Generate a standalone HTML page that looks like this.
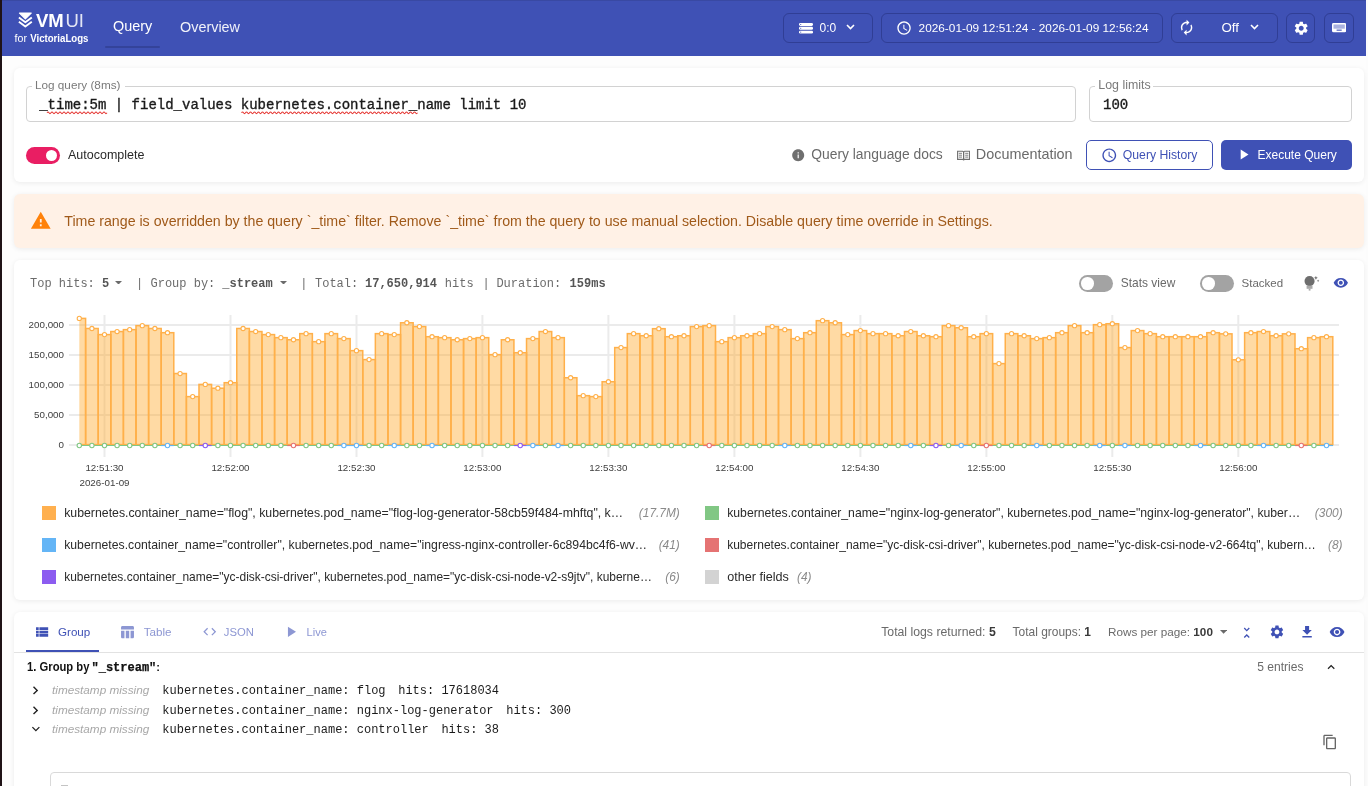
<!DOCTYPE html>
<html><head><meta charset="utf-8">
<style>
*{box-sizing:border-box;margin:0;padding:0}
html,body{width:1368px;height:786px;overflow:hidden}
body{position:relative;background:#fdfdfd;font-family:"Liberation Sans",sans-serif;color:#1a1a1a}
.abs{position:absolute}
.lb{position:absolute;left:0;top:0;width:2px;height:786px;background:#1f1216}
.rs{position:absolute;left:1366px;top:0;width:2px;height:786px;background:#fcfcfc}
.hdr{position:absolute;left:2px;top:0;width:1364px;height:56px;background:#3f51b5}
.card{position:absolute;left:14px;width:1350px;background:#fff;border-radius:6px;box-shadow:0 1px 5px rgba(0,0,0,0.075)}
.t{position:absolute;white-space:pre;line-height:1}
.mono{font-family:"Liberation Mono",monospace}
.hbox{position:absolute;border:1px solid rgba(0,0,0,0.18);border-radius:6px;top:13px;height:29px}
.field{position:absolute;border:1px solid #cfcfcf;border-radius:4px}
.flabel{position:absolute;background:#fff;padding:0 3px;color:#808080;font-size:11.7px;line-height:1;white-space:nowrap}
.tog{position:absolute;width:34px;height:17px;border-radius:9px}
.tog::after{content:"";position:absolute;top:2.5px;width:12px;height:12px;border-radius:50%;background:#fff}
.tog.on{background:#e91e63}.tog.on::after{left:19.5px}
.tog.off{background:#a6a6a6}.tog.off::after{left:2.5px}
.sq{position:absolute;width:14px;height:14px}
.lg{position:absolute;font-size:12.4px;color:#2b2b2b;white-space:nowrap;line-height:1}
.cnt{position:absolute;font-size:12.4px;color:#8a8a8a;font-style:italic;white-space:nowrap;line-height:1;text-align:right}
</style></head><body>
<div class="lb"></div><div class="rs"></div>
<div class="hdr"></div>
<!-- cards -->
<div class="card" style="top:68px;height:114px"></div>
<div class="card" style="top:194px;height:54px;background:#fff1e6"></div>
<div class="card" style="top:260px;height:340px"></div>
<div class="card" style="top:612px;height:200px"></div>
<svg class="chart" width="1368" height="786" viewBox="0 0 1368 786" style="position:absolute;left:0;top:0;will-change:transform;font-family:'Liberation Sans',sans-serif;font-size:9.8px;fill:#404040"><line x1="69" y1="325.0" x2="1339" y2="325.0" stroke="#ebebeb" stroke-width="2"/><line x1="69" y1="355.0" x2="1339" y2="355.0" stroke="#ebebeb" stroke-width="2"/><line x1="69" y1="385.0" x2="1339" y2="385.0" stroke="#ebebeb" stroke-width="2"/><line x1="69" y1="415.0" x2="1339" y2="415.0" stroke="#ebebeb" stroke-width="2"/><line x1="69" y1="445.0" x2="1339" y2="445.0" stroke="#ebebeb" stroke-width="2"/><line x1="104.5" y1="315" x2="104.5" y2="457" stroke="#ebebeb" stroke-width="2"/><line x1="230.5" y1="315" x2="230.5" y2="457" stroke="#ebebeb" stroke-width="2"/><line x1="356.5" y1="315" x2="356.5" y2="457" stroke="#ebebeb" stroke-width="2"/><line x1="482.4" y1="315" x2="482.4" y2="457" stroke="#ebebeb" stroke-width="2"/><line x1="608.4" y1="315" x2="608.4" y2="457" stroke="#ebebeb" stroke-width="2"/><line x1="734.4" y1="315" x2="734.4" y2="457" stroke="#ebebeb" stroke-width="2"/><line x1="860.4" y1="315" x2="860.4" y2="457" stroke="#ebebeb" stroke-width="2"/><line x1="986.4" y1="315" x2="986.4" y2="457" stroke="#ebebeb" stroke-width="2"/><line x1="1112.3" y1="315" x2="1112.3" y2="457" stroke="#ebebeb" stroke-width="2"/><line x1="1238.3" y1="315" x2="1238.3" y2="457" stroke="#ebebeb" stroke-width="2"/><defs><clipPath id="pc"><rect x="79.3" y="300" width="1260" height="160"/></clipPath></defs><g clip-path="url(#pc)" fill="rgba(255,167,38,0.42)" stroke="#ffb04a" stroke-width="1.5"><rect x="73.00" y="318.38" width="12.60" height="126.22"/><rect x="85.60" y="328.49" width="12.60" height="116.11"/><rect x="98.20" y="334.60" width="12.60" height="110.00"/><rect x="110.79" y="331.55" width="12.60" height="113.05"/><rect x="123.39" y="329.64" width="12.60" height="114.96"/><rect x="135.99" y="325.63" width="12.60" height="118.97"/><rect x="148.59" y="328.49" width="12.60" height="116.11"/><rect x="161.19" y="332.69" width="12.60" height="111.91"/><rect x="173.78" y="373.53" width="12.60" height="71.07"/><rect x="186.38" y="396.62" width="12.60" height="47.98"/><rect x="198.98" y="384.41" width="12.60" height="60.19"/><rect x="211.58" y="388.22" width="12.60" height="56.38"/><rect x="224.18" y="382.69" width="12.60" height="61.91"/><rect x="236.77" y="328.49" width="12.60" height="116.11"/><rect x="249.37" y="331.55" width="12.60" height="113.05"/><rect x="261.97" y="334.60" width="12.60" height="110.00"/><rect x="274.57" y="337.65" width="12.60" height="106.95"/><rect x="287.17" y="339.75" width="12.60" height="104.85"/><rect x="299.76" y="333.64" width="12.60" height="110.96"/><rect x="312.36" y="341.66" width="12.60" height="102.94"/><rect x="324.96" y="333.64" width="12.60" height="110.96"/><rect x="337.56" y="338.61" width="12.60" height="105.99"/><rect x="350.16" y="350.63" width="12.60" height="93.97"/><rect x="362.75" y="359.60" width="12.60" height="85.00"/><rect x="375.35" y="333.64" width="12.60" height="110.96"/><rect x="387.95" y="334.60" width="12.60" height="110.00"/><rect x="400.55" y="322.77" width="12.60" height="121.83"/><rect x="413.15" y="326.58" width="12.60" height="118.02"/><rect x="425.74" y="336.70" width="12.60" height="107.90"/><rect x="438.34" y="337.65" width="12.60" height="106.95"/><rect x="450.94" y="339.75" width="12.60" height="104.85"/><rect x="463.54" y="338.61" width="12.60" height="105.99"/><rect x="476.14" y="337.65" width="12.60" height="106.95"/><rect x="488.73" y="354.64" width="12.60" height="89.96"/><rect x="501.33" y="339.75" width="12.60" height="104.85"/><rect x="513.93" y="352.73" width="12.60" height="91.87"/><rect x="526.53" y="338.61" width="12.60" height="105.99"/><rect x="539.13" y="331.55" width="12.60" height="113.05"/><rect x="551.72" y="337.65" width="12.60" height="106.95"/><rect x="564.32" y="377.73" width="12.60" height="66.87"/><rect x="576.92" y="395.67" width="12.60" height="48.93"/><rect x="589.52" y="396.62" width="12.60" height="47.98"/><rect x="602.12" y="381.74" width="12.60" height="62.86"/><rect x="614.71" y="347.58" width="12.60" height="97.02"/><rect x="627.31" y="333.64" width="12.60" height="110.96"/><rect x="639.91" y="335.74" width="12.60" height="108.86"/><rect x="652.51" y="328.68" width="12.60" height="115.92"/><rect x="665.11" y="336.70" width="12.60" height="107.90"/><rect x="677.70" y="335.74" width="12.60" height="108.86"/><rect x="690.30" y="326.58" width="12.60" height="118.02"/><rect x="702.90" y="325.63" width="12.60" height="118.97"/><rect x="715.50" y="341.66" width="12.60" height="102.94"/><rect x="728.10" y="337.65" width="12.60" height="106.95"/><rect x="740.69" y="335.74" width="12.60" height="108.86"/><rect x="753.29" y="333.64" width="12.60" height="110.96"/><rect x="765.89" y="326.58" width="12.60" height="118.02"/><rect x="778.49" y="329.64" width="12.60" height="114.96"/><rect x="791.09" y="338.61" width="12.60" height="105.99"/><rect x="803.68" y="332.69" width="12.60" height="111.91"/><rect x="816.28" y="320.67" width="12.60" height="123.93"/><rect x="828.88" y="322.77" width="12.60" height="121.83"/><rect x="841.48" y="334.60" width="12.60" height="110.00"/><rect x="854.08" y="330.59" width="12.60" height="114.01"/><rect x="866.67" y="333.64" width="12.60" height="110.96"/><rect x="879.27" y="333.64" width="12.60" height="110.96"/><rect x="891.87" y="335.74" width="12.60" height="108.86"/><rect x="904.47" y="331.55" width="12.60" height="113.05"/><rect x="917.07" y="335.74" width="12.60" height="108.86"/><rect x="929.66" y="336.70" width="12.60" height="107.90"/><rect x="942.26" y="325.63" width="12.60" height="118.97"/><rect x="954.86" y="327.73" width="12.60" height="116.87"/><rect x="967.46" y="336.70" width="12.60" height="107.90"/><rect x="980.06" y="333.64" width="12.60" height="110.96"/><rect x="992.65" y="363.61" width="12.60" height="80.99"/><rect x="1005.25" y="333.64" width="12.60" height="110.96"/><rect x="1017.85" y="335.74" width="12.60" height="108.86"/><rect x="1030.45" y="338.61" width="12.60" height="105.99"/><rect x="1043.05" y="337.65" width="12.60" height="106.95"/><rect x="1055.64" y="332.69" width="12.60" height="111.91"/><rect x="1068.24" y="325.63" width="12.60" height="118.97"/><rect x="1080.84" y="332.69" width="12.60" height="111.91"/><rect x="1093.44" y="324.67" width="12.60" height="119.93"/><rect x="1106.04" y="323.72" width="12.60" height="120.88"/><rect x="1118.63" y="347.58" width="12.60" height="97.02"/><rect x="1131.23" y="330.59" width="12.60" height="114.01"/><rect x="1143.83" y="333.64" width="12.60" height="110.96"/><rect x="1156.43" y="336.70" width="12.60" height="107.90"/><rect x="1169.03" y="336.70" width="12.60" height="107.90"/><rect x="1181.62" y="336.70" width="12.60" height="107.90"/><rect x="1194.22" y="336.70" width="12.60" height="107.90"/><rect x="1206.82" y="332.69" width="12.60" height="111.91"/><rect x="1219.42" y="333.84" width="12.60" height="110.76"/><rect x="1232.02" y="359.79" width="12.60" height="84.81"/><rect x="1244.61" y="332.69" width="12.60" height="111.91"/><rect x="1257.21" y="331.55" width="12.60" height="113.05"/><rect x="1269.81" y="335.74" width="12.60" height="108.86"/><rect x="1282.41" y="333.84" width="12.60" height="110.76"/><rect x="1295.01" y="348.72" width="12.60" height="95.88"/><rect x="1307.60" y="337.65" width="12.60" height="106.95"/><rect x="1320.20" y="336.70" width="12.60" height="107.90"/></g><line x1="79.3" y1="445.5" x2="1333" y2="445.5" stroke="#81c784" stroke-width="1.2"/><line x1="161.19" y1="445.5" x2="173.79" y2="445.5" stroke="#64b5f6" stroke-width="1.2"/><line x1="198.98" y1="445.5" x2="211.58" y2="445.5" stroke="#8c5cf0" stroke-width="1.2"/><line x1="287.17" y1="445.5" x2="299.77" y2="445.5" stroke="#e57373" stroke-width="1.2"/><line x1="337.56" y1="445.5" x2="350.16" y2="445.5" stroke="#64b5f6" stroke-width="1.2"/><line x1="350.16" y1="445.5" x2="362.76" y2="445.5" stroke="#64b5f6" stroke-width="1.2"/><line x1="387.95" y1="445.5" x2="400.55" y2="445.5" stroke="#64b5f6" stroke-width="1.2"/><line x1="425.74" y1="445.5" x2="438.34" y2="445.5" stroke="#64b5f6" stroke-width="1.2"/><line x1="513.93" y1="445.5" x2="526.53" y2="445.5" stroke="#8c5cf0" stroke-width="1.2"/><line x1="526.53" y1="445.5" x2="539.13" y2="445.5" stroke="#64b5f6" stroke-width="1.2"/><line x1="551.72" y1="445.5" x2="564.32" y2="445.5" stroke="#64b5f6" stroke-width="1.2"/><line x1="702.90" y1="445.5" x2="715.50" y2="445.5" stroke="#e57373" stroke-width="1.2"/><line x1="778.49" y1="445.5" x2="791.09" y2="445.5" stroke="#64b5f6" stroke-width="1.2"/><line x1="904.47" y1="445.5" x2="917.07" y2="445.5" stroke="#64b5f6" stroke-width="1.2"/><line x1="929.66" y1="445.5" x2="942.26" y2="445.5" stroke="#8c5cf0" stroke-width="1.2"/><line x1="954.86" y1="445.5" x2="967.46" y2="445.5" stroke="#64b5f6" stroke-width="1.2"/><line x1="980.06" y1="445.5" x2="992.66" y2="445.5" stroke="#e57373" stroke-width="1.2"/><line x1="1030.45" y1="445.5" x2="1043.05" y2="445.5" stroke="#64b5f6" stroke-width="1.2"/><line x1="1093.44" y1="445.5" x2="1106.04" y2="445.5" stroke="#64b5f6" stroke-width="1.2"/><line x1="1118.63" y1="445.5" x2="1131.23" y2="445.5" stroke="#64b5f6" stroke-width="1.2"/><line x1="1194.22" y1="445.5" x2="1206.82" y2="445.5" stroke="#64b5f6" stroke-width="1.2"/><line x1="1257.21" y1="445.5" x2="1269.81" y2="445.5" stroke="#64b5f6" stroke-width="1.2"/><line x1="1295.01" y1="445.5" x2="1307.61" y2="445.5" stroke="#e57373" stroke-width="1.2"/><line x1="1320.20" y1="445.5" x2="1332.80" y2="445.5" stroke="#64b5f6" stroke-width="1.2"/><g fill="#fff" stroke-width="1.1"><circle cx="79.30" cy="318.38" r="2.1" stroke="#ffb04a"/><circle cx="79.30" cy="445.5" r="2.2" stroke="#81c784"/><circle cx="91.90" cy="328.49" r="2.1" stroke="#ffb04a"/><circle cx="91.90" cy="445.5" r="2.2" stroke="#81c784"/><circle cx="104.50" cy="334.60" r="2.1" stroke="#ffb04a"/><circle cx="104.50" cy="445.5" r="2.2" stroke="#81c784"/><circle cx="117.09" cy="331.55" r="2.1" stroke="#ffb04a"/><circle cx="117.09" cy="445.5" r="2.2" stroke="#81c784"/><circle cx="129.69" cy="329.64" r="2.1" stroke="#ffb04a"/><circle cx="129.69" cy="445.5" r="2.2" stroke="#81c784"/><circle cx="142.29" cy="325.63" r="2.1" stroke="#ffb04a"/><circle cx="142.29" cy="445.5" r="2.2" stroke="#81c784"/><circle cx="154.89" cy="328.49" r="2.1" stroke="#ffb04a"/><circle cx="154.89" cy="445.5" r="2.2" stroke="#81c784"/><circle cx="167.49" cy="332.69" r="2.1" stroke="#ffb04a"/><circle cx="167.49" cy="445.5" r="2.2" stroke="#64b5f6"/><circle cx="180.08" cy="373.53" r="2.1" stroke="#ffb04a"/><circle cx="180.08" cy="445.5" r="2.2" stroke="#81c784"/><circle cx="192.68" cy="396.62" r="2.1" stroke="#ffb04a"/><circle cx="192.68" cy="445.5" r="2.2" stroke="#81c784"/><circle cx="205.28" cy="384.41" r="2.1" stroke="#ffb04a"/><circle cx="205.28" cy="445.5" r="2.2" stroke="#8c5cf0"/><circle cx="217.88" cy="388.22" r="2.1" stroke="#ffb04a"/><circle cx="217.88" cy="445.5" r="2.2" stroke="#81c784"/><circle cx="230.48" cy="382.69" r="2.1" stroke="#ffb04a"/><circle cx="230.48" cy="445.5" r="2.2" stroke="#81c784"/><circle cx="243.07" cy="328.49" r="2.1" stroke="#ffb04a"/><circle cx="243.07" cy="445.5" r="2.2" stroke="#81c784"/><circle cx="255.67" cy="331.55" r="2.1" stroke="#ffb04a"/><circle cx="255.67" cy="445.5" r="2.2" stroke="#81c784"/><circle cx="268.27" cy="334.60" r="2.1" stroke="#ffb04a"/><circle cx="268.27" cy="445.5" r="2.2" stroke="#81c784"/><circle cx="280.87" cy="337.65" r="2.1" stroke="#ffb04a"/><circle cx="280.87" cy="445.5" r="2.2" stroke="#81c784"/><circle cx="293.47" cy="339.75" r="2.1" stroke="#ffb04a"/><circle cx="293.47" cy="445.5" r="2.2" stroke="#e57373"/><circle cx="306.06" cy="333.64" r="2.1" stroke="#ffb04a"/><circle cx="306.06" cy="445.5" r="2.2" stroke="#81c784"/><circle cx="318.66" cy="341.66" r="2.1" stroke="#ffb04a"/><circle cx="318.66" cy="445.5" r="2.2" stroke="#81c784"/><circle cx="331.26" cy="333.64" r="2.1" stroke="#ffb04a"/><circle cx="331.26" cy="445.5" r="2.2" stroke="#81c784"/><circle cx="343.86" cy="338.61" r="2.1" stroke="#ffb04a"/><circle cx="343.86" cy="445.5" r="2.2" stroke="#64b5f6"/><circle cx="356.46" cy="350.63" r="2.1" stroke="#ffb04a"/><circle cx="356.46" cy="445.5" r="2.2" stroke="#64b5f6"/><circle cx="369.05" cy="359.60" r="2.1" stroke="#ffb04a"/><circle cx="369.05" cy="445.5" r="2.2" stroke="#81c784"/><circle cx="381.65" cy="333.64" r="2.1" stroke="#ffb04a"/><circle cx="381.65" cy="445.5" r="2.2" stroke="#81c784"/><circle cx="394.25" cy="334.60" r="2.1" stroke="#ffb04a"/><circle cx="394.25" cy="445.5" r="2.2" stroke="#64b5f6"/><circle cx="406.85" cy="322.77" r="2.1" stroke="#ffb04a"/><circle cx="406.85" cy="445.5" r="2.2" stroke="#81c784"/><circle cx="419.45" cy="326.58" r="2.1" stroke="#ffb04a"/><circle cx="419.45" cy="445.5" r="2.2" stroke="#81c784"/><circle cx="432.04" cy="336.70" r="2.1" stroke="#ffb04a"/><circle cx="432.04" cy="445.5" r="2.2" stroke="#64b5f6"/><circle cx="444.64" cy="337.65" r="2.1" stroke="#ffb04a"/><circle cx="444.64" cy="445.5" r="2.2" stroke="#81c784"/><circle cx="457.24" cy="339.75" r="2.1" stroke="#ffb04a"/><circle cx="457.24" cy="445.5" r="2.2" stroke="#81c784"/><circle cx="469.84" cy="338.61" r="2.1" stroke="#ffb04a"/><circle cx="469.84" cy="445.5" r="2.2" stroke="#81c784"/><circle cx="482.44" cy="337.65" r="2.1" stroke="#ffb04a"/><circle cx="482.44" cy="445.5" r="2.2" stroke="#81c784"/><circle cx="495.03" cy="354.64" r="2.1" stroke="#ffb04a"/><circle cx="495.03" cy="445.5" r="2.2" stroke="#81c784"/><circle cx="507.63" cy="339.75" r="2.1" stroke="#ffb04a"/><circle cx="507.63" cy="445.5" r="2.2" stroke="#81c784"/><circle cx="520.23" cy="352.73" r="2.1" stroke="#ffb04a"/><circle cx="520.23" cy="445.5" r="2.2" stroke="#8c5cf0"/><circle cx="532.83" cy="338.61" r="2.1" stroke="#ffb04a"/><circle cx="532.83" cy="445.5" r="2.2" stroke="#64b5f6"/><circle cx="545.43" cy="331.55" r="2.1" stroke="#ffb04a"/><circle cx="545.43" cy="445.5" r="2.2" stroke="#81c784"/><circle cx="558.02" cy="337.65" r="2.1" stroke="#ffb04a"/><circle cx="558.02" cy="445.5" r="2.2" stroke="#64b5f6"/><circle cx="570.62" cy="377.73" r="2.1" stroke="#ffb04a"/><circle cx="570.62" cy="445.5" r="2.2" stroke="#81c784"/><circle cx="583.22" cy="395.67" r="2.1" stroke="#ffb04a"/><circle cx="583.22" cy="445.5" r="2.2" stroke="#81c784"/><circle cx="595.82" cy="396.62" r="2.1" stroke="#ffb04a"/><circle cx="595.82" cy="445.5" r="2.2" stroke="#81c784"/><circle cx="608.42" cy="381.74" r="2.1" stroke="#ffb04a"/><circle cx="608.42" cy="445.5" r="2.2" stroke="#81c784"/><circle cx="621.01" cy="347.58" r="2.1" stroke="#ffb04a"/><circle cx="621.01" cy="445.5" r="2.2" stroke="#81c784"/><circle cx="633.61" cy="333.64" r="2.1" stroke="#ffb04a"/><circle cx="633.61" cy="445.5" r="2.2" stroke="#81c784"/><circle cx="646.21" cy="335.74" r="2.1" stroke="#ffb04a"/><circle cx="646.21" cy="445.5" r="2.2" stroke="#81c784"/><circle cx="658.81" cy="328.68" r="2.1" stroke="#ffb04a"/><circle cx="658.81" cy="445.5" r="2.2" stroke="#81c784"/><circle cx="671.41" cy="336.70" r="2.1" stroke="#ffb04a"/><circle cx="671.41" cy="445.5" r="2.2" stroke="#81c784"/><circle cx="684.00" cy="335.74" r="2.1" stroke="#ffb04a"/><circle cx="684.00" cy="445.5" r="2.2" stroke="#81c784"/><circle cx="696.60" cy="326.58" r="2.1" stroke="#ffb04a"/><circle cx="696.60" cy="445.5" r="2.2" stroke="#81c784"/><circle cx="709.20" cy="325.63" r="2.1" stroke="#ffb04a"/><circle cx="709.20" cy="445.5" r="2.2" stroke="#e57373"/><circle cx="721.80" cy="341.66" r="2.1" stroke="#ffb04a"/><circle cx="721.80" cy="445.5" r="2.2" stroke="#81c784"/><circle cx="734.40" cy="337.65" r="2.1" stroke="#ffb04a"/><circle cx="734.40" cy="445.5" r="2.2" stroke="#81c784"/><circle cx="746.99" cy="335.74" r="2.1" stroke="#ffb04a"/><circle cx="746.99" cy="445.5" r="2.2" stroke="#81c784"/><circle cx="759.59" cy="333.64" r="2.1" stroke="#ffb04a"/><circle cx="759.59" cy="445.5" r="2.2" stroke="#81c784"/><circle cx="772.19" cy="326.58" r="2.1" stroke="#ffb04a"/><circle cx="772.19" cy="445.5" r="2.2" stroke="#81c784"/><circle cx="784.79" cy="329.64" r="2.1" stroke="#ffb04a"/><circle cx="784.79" cy="445.5" r="2.2" stroke="#64b5f6"/><circle cx="797.39" cy="338.61" r="2.1" stroke="#ffb04a"/><circle cx="797.39" cy="445.5" r="2.2" stroke="#81c784"/><circle cx="809.98" cy="332.69" r="2.1" stroke="#ffb04a"/><circle cx="809.98" cy="445.5" r="2.2" stroke="#81c784"/><circle cx="822.58" cy="320.67" r="2.1" stroke="#ffb04a"/><circle cx="822.58" cy="445.5" r="2.2" stroke="#81c784"/><circle cx="835.18" cy="322.77" r="2.1" stroke="#ffb04a"/><circle cx="835.18" cy="445.5" r="2.2" stroke="#81c784"/><circle cx="847.78" cy="334.60" r="2.1" stroke="#ffb04a"/><circle cx="847.78" cy="445.5" r="2.2" stroke="#81c784"/><circle cx="860.38" cy="330.59" r="2.1" stroke="#ffb04a"/><circle cx="860.38" cy="445.5" r="2.2" stroke="#81c784"/><circle cx="872.97" cy="333.64" r="2.1" stroke="#ffb04a"/><circle cx="872.97" cy="445.5" r="2.2" stroke="#81c784"/><circle cx="885.57" cy="333.64" r="2.1" stroke="#ffb04a"/><circle cx="885.57" cy="445.5" r="2.2" stroke="#81c784"/><circle cx="898.17" cy="335.74" r="2.1" stroke="#ffb04a"/><circle cx="898.17" cy="445.5" r="2.2" stroke="#81c784"/><circle cx="910.77" cy="331.55" r="2.1" stroke="#ffb04a"/><circle cx="910.77" cy="445.5" r="2.2" stroke="#64b5f6"/><circle cx="923.37" cy="335.74" r="2.1" stroke="#ffb04a"/><circle cx="923.37" cy="445.5" r="2.2" stroke="#81c784"/><circle cx="935.96" cy="336.70" r="2.1" stroke="#ffb04a"/><circle cx="935.96" cy="445.5" r="2.2" stroke="#8c5cf0"/><circle cx="948.56" cy="325.63" r="2.1" stroke="#ffb04a"/><circle cx="948.56" cy="445.5" r="2.2" stroke="#81c784"/><circle cx="961.16" cy="327.73" r="2.1" stroke="#ffb04a"/><circle cx="961.16" cy="445.5" r="2.2" stroke="#64b5f6"/><circle cx="973.76" cy="336.70" r="2.1" stroke="#ffb04a"/><circle cx="973.76" cy="445.5" r="2.2" stroke="#81c784"/><circle cx="986.36" cy="333.64" r="2.1" stroke="#ffb04a"/><circle cx="986.36" cy="445.5" r="2.2" stroke="#e57373"/><circle cx="998.95" cy="363.61" r="2.1" stroke="#ffb04a"/><circle cx="998.95" cy="445.5" r="2.2" stroke="#81c784"/><circle cx="1011.55" cy="333.64" r="2.1" stroke="#ffb04a"/><circle cx="1011.55" cy="445.5" r="2.2" stroke="#81c784"/><circle cx="1024.15" cy="335.74" r="2.1" stroke="#ffb04a"/><circle cx="1024.15" cy="445.5" r="2.2" stroke="#81c784"/><circle cx="1036.75" cy="338.61" r="2.1" stroke="#ffb04a"/><circle cx="1036.75" cy="445.5" r="2.2" stroke="#64b5f6"/><circle cx="1049.35" cy="337.65" r="2.1" stroke="#ffb04a"/><circle cx="1049.35" cy="445.5" r="2.2" stroke="#81c784"/><circle cx="1061.94" cy="332.69" r="2.1" stroke="#ffb04a"/><circle cx="1061.94" cy="445.5" r="2.2" stroke="#81c784"/><circle cx="1074.54" cy="325.63" r="2.1" stroke="#ffb04a"/><circle cx="1074.54" cy="445.5" r="2.2" stroke="#81c784"/><circle cx="1087.14" cy="332.69" r="2.1" stroke="#ffb04a"/><circle cx="1087.14" cy="445.5" r="2.2" stroke="#81c784"/><circle cx="1099.74" cy="324.67" r="2.1" stroke="#ffb04a"/><circle cx="1099.74" cy="445.5" r="2.2" stroke="#64b5f6"/><circle cx="1112.34" cy="323.72" r="2.1" stroke="#ffb04a"/><circle cx="1112.34" cy="445.5" r="2.2" stroke="#81c784"/><circle cx="1124.93" cy="347.58" r="2.1" stroke="#ffb04a"/><circle cx="1124.93" cy="445.5" r="2.2" stroke="#64b5f6"/><circle cx="1137.53" cy="330.59" r="2.1" stroke="#ffb04a"/><circle cx="1137.53" cy="445.5" r="2.2" stroke="#81c784"/><circle cx="1150.13" cy="333.64" r="2.1" stroke="#ffb04a"/><circle cx="1150.13" cy="445.5" r="2.2" stroke="#81c784"/><circle cx="1162.73" cy="336.70" r="2.1" stroke="#ffb04a"/><circle cx="1162.73" cy="445.5" r="2.2" stroke="#81c784"/><circle cx="1175.33" cy="336.70" r="2.1" stroke="#ffb04a"/><circle cx="1175.33" cy="445.5" r="2.2" stroke="#81c784"/><circle cx="1187.92" cy="336.70" r="2.1" stroke="#ffb04a"/><circle cx="1187.92" cy="445.5" r="2.2" stroke="#81c784"/><circle cx="1200.52" cy="336.70" r="2.1" stroke="#ffb04a"/><circle cx="1200.52" cy="445.5" r="2.2" stroke="#64b5f6"/><circle cx="1213.12" cy="332.69" r="2.1" stroke="#ffb04a"/><circle cx="1213.12" cy="445.5" r="2.2" stroke="#81c784"/><circle cx="1225.72" cy="333.84" r="2.1" stroke="#ffb04a"/><circle cx="1225.72" cy="445.5" r="2.2" stroke="#81c784"/><circle cx="1238.32" cy="359.79" r="2.1" stroke="#ffb04a"/><circle cx="1238.32" cy="445.5" r="2.2" stroke="#81c784"/><circle cx="1250.91" cy="332.69" r="2.1" stroke="#ffb04a"/><circle cx="1250.91" cy="445.5" r="2.2" stroke="#81c784"/><circle cx="1263.51" cy="331.55" r="2.1" stroke="#ffb04a"/><circle cx="1263.51" cy="445.5" r="2.2" stroke="#64b5f6"/><circle cx="1276.11" cy="335.74" r="2.1" stroke="#ffb04a"/><circle cx="1276.11" cy="445.5" r="2.2" stroke="#81c784"/><circle cx="1288.71" cy="333.84" r="2.1" stroke="#ffb04a"/><circle cx="1288.71" cy="445.5" r="2.2" stroke="#81c784"/><circle cx="1301.31" cy="348.72" r="2.1" stroke="#ffb04a"/><circle cx="1301.31" cy="445.5" r="2.2" stroke="#e57373"/><circle cx="1313.90" cy="337.65" r="2.1" stroke="#ffb04a"/><circle cx="1313.90" cy="445.5" r="2.2" stroke="#81c784"/><circle cx="1326.50" cy="336.70" r="2.1" stroke="#ffb04a"/><circle cx="1326.50" cy="445.5" r="2.2" stroke="#64b5f6"/></g><text x="64" y="328.2" text-anchor="end">200,000</text><text x="64" y="358.2" text-anchor="end">150,000</text><text x="64" y="388.2" text-anchor="end">100,000</text><text x="64" y="418.2" text-anchor="end">50,000</text><text x="64" y="448.2" text-anchor="end">0</text><text x="104.5" y="471.4" text-anchor="middle">12:51:30</text><text x="230.5" y="471.4" text-anchor="middle">12:52:00</text><text x="356.5" y="471.4" text-anchor="middle">12:52:30</text><text x="482.4" y="471.4" text-anchor="middle">12:53:00</text><text x="608.4" y="471.4" text-anchor="middle">12:53:30</text><text x="734.4" y="471.4" text-anchor="middle">12:54:00</text><text x="860.4" y="471.4" text-anchor="middle">12:54:30</text><text x="986.4" y="471.4" text-anchor="middle">12:55:00</text><text x="1112.3" y="471.4" text-anchor="middle">12:55:30</text><text x="1238.3" y="471.4" text-anchor="middle">12:56:00</text><text x="104.5" y="486" text-anchor="middle">2026-01-09</text></svg>
<div class="abs" style="left:2.0px;top:0.0px;width:1364.0px;height:1.0px;background:#3949a3"></div>
<svg class="abs" style="left:17.50px;top:12.30px;" width="15.00" height="17.00" viewBox="0 0 15 17"><path fill="#fff" stroke="#fff" stroke-width="1.3" stroke-linejoin="round" d="M1.5 1.1 H13.2 L7.35 6.8 Z"/><path fill="none" stroke="#fff" stroke-width="1.9" stroke-linejoin="round" d="M0.9 5.4 L7.35 10.3 L13.8 5.4"/><path fill="none" stroke="#fff" stroke-width="1.9" stroke-linejoin="round" d="M0.9 9.7 L7.35 14.6 L13.8 9.7"/></svg>
<div class="abs" style="left:105.3px;top:46.0px;width:54.5px;height:2.0px;background:#34439a;border-radius:1px"></div>
<div class="abs" style="left:783.4px;top:13.0px;width:89.2px;height:29.8px;border:1px solid rgba(20,30,90,0.35);border-radius:6px"></div>
<div class="abs" style="left:881.3px;top:13.0px;width:281.7px;height:29.8px;border:1px solid rgba(20,30,90,0.35);border-radius:6px"></div>
<div class="abs" style="left:1286.1px;top:13.0px;width:29.4px;height:29.8px;border:1px solid rgba(20,30,90,0.35);border-radius:6px"></div>
<div class="abs" style="left:1324.3px;top:13.0px;width:29.4px;height:29.8px;border:1px solid rgba(20,30,90,0.35);border-radius:6px"></div>
<div class="abs" style="left:1171.4px;top:12.5px;width:106.2px;height:30.7px;border:1px solid rgba(20,30,90,0.35);border-radius:6px"></div>
<svg class="abs" style="left:799.00px;top:23.00px;" width="14.00" height="10.60" viewBox="0 0 14 10.6"><g fill="#fff"><rect x="0" y="0" width="14" height="2.9" rx="1.3"/><rect x="0" y="3.85" width="14" height="2.9" rx="1.3"/><rect x="0" y="7.7" width="14" height="2.9" rx="1.3"/></g><g fill="#3f51b5"><rect x="1.2" y="1" width="1" height="0.9"/><rect x="1.2" y="4.85" width="1" height="0.9"/><rect x="1.2" y="8.7" width="1" height="0.9"/></g></svg>
<svg class="abs" style="left:845.50px;top:23.50px;" width="9.00" height="6.00" viewBox="0 0 9 6"><path d="M1 1 L4.5 4.5 L8 1" fill="none" stroke="#fff" stroke-width="1.6"/></svg>
<svg class="abs" style="left:895.66px;top:19.66px;" width="16.08" height="16.08" viewBox="0 0 24 24"><path fill="#ffffff" d="M11.99 2C6.47 2 2 6.48 2 12s4.47 10 9.99 10C17.52 22 22 17.52 22 12S17.52 2 11.99 2zM12 20c-4.42 0-8-3.58-8-8s3.58-8 8-8 8 3.58 8 8-3.58 8-8 8zm.5-13H11v6l5.25 3.15.75-1.23-4.5-2.67z"/></svg>
<svg class="abs" style="left:1178.14px;top:19.28px;" width="17.18" height="17.18" viewBox="0 0 24 24"><path fill="#ffffff" d="M12 6v3l4-4-4-4v3c-4.42 0-8 3.58-8 8 0 1.57.46 3.03 1.24 4.26L6.7 14.8c-.45-.83-.7-1.790-.7-2.8 0-3.31 2.69-6 6-6zm6.76 1.74L17.3 9.2c.44.84.7 1.79.7 2.8 0 3.31-2.69 6-6 6v-3l-4 4 4 4v-3c4.42 0 8-3.58 8-8 0-1.57-.46-3.03-1.24-4.26z"/></svg>
<svg class="abs" style="left:1249.50px;top:23.50px;" width="9.00" height="6.00" viewBox="0 0 9 6"><path d="M1 1 L4.5 4.5 L8 1" fill="none" stroke="#fff" stroke-width="1.6"/></svg>
<svg class="abs" style="left:1292.65px;top:19.63px;" width="16.44" height="16.44" viewBox="0 0 24 24"><path fill="#ffffff" d="M19.14 12.94c.04-.3.06-.61.06-.94 0-.32-.02-.64-.07-.94l2.03-1.58c.18-.14.23-.41.12-.61l-1.92-3.32c-.12-.22-.37-.29-.59-.22l-2.39.96c-.5-.38-1.03-.7-1.62-.94l-.36-2.54c-.04-.24-.24-.41-.48-.41h-3.84c-.24 0-.43.17-.47.41l-.36 2.54c-.59.24-1.13.57-1.62.94l-2.39-.96c-.22-.08-.47 0-.59.22L2.74 8.87c-.12.21-.08.47.12.61l2.03 1.58c-.05.3-.09.63-.09.94s.02.64.07.94l-2.03 1.58c-.18.14-.23.41-.12.61l1.92 3.32c.12.22.37.29.59.22l2.39-.96c.5.38 1.03.7 1.62.94l.36 2.54c.05.24.24.41.48.41h3.840c.24 0 .44-.17.47-.41l.36-2.54c.59-.24 1.13-.56 1.62-.94l2.39.96c.22.08.47 0 .59-.22l1.92-3.32c.12-.22.07-.47-.12-.61l-2.01-1.58zM12 15.6c-1.98 0-3.6-1.62-3.6-3.6s1.62-3.6 3.6-3.6 3.6 1.62 3.6 3.6-1.62 3.6-3.6 3.6z"/></svg>
<svg class="abs" style="left:1331.80px;top:23.40px;" width="14.30" height="9.30" viewBox="0 0 14.3 9.3"><rect x="0" y="0" width="14.3" height="9.3" rx="1.5" fill="#fff"/><rect x="1.5" y="1.5" width="11.3" height="4.2" fill="#aab2e0"/><rect x="4.6" y="6.6" width="5.1" height="1.1" fill="#3f51b5"/></svg>
<div class="abs" style="left:26.3px;top:86.2px;width:1049.9px;height:35.7px;border:1px solid #d2d2d2;border-radius:4px"></div>
<div class="abs" style="left:1089.3px;top:86.2px;width:262.4px;height:35.7px;border:1px solid #d2d2d2;border-radius:4px"></div>
<div class="abs" style="left:32.0px;top:80.0px;width:92.5px;height:10.0px;background:#fff"></div>
<div class="abs" style="left:1095.0px;top:80.0px;width:57.8px;height:10.0px;background:#fff"></div>
<svg class="abs" style="left:0.00px;top:0.00px;pointer-events:none" width="1368.00" height="786.00" viewBox="0 0 1368 786"><path d="M47.0 112.8 q1 -1.6 2 0 t2 0 q1 -1.6 2 0 t2 0 q1 -1.6 2 0 t2 0 q1 -1.6 2 0 t2 0 q1 -1.6 2 0 t2 0 q1 -1.6 2 0 t2 0 q1 -1.6 2 0 t2 0 q1 -1.6 2 0 t2 0 q1 -1.6 2 0 t2 0 q1 -1.6 2 0 t2 0 q1 -1.6 2 0 t2 0 q1 -1.6 2 0 t2 0 q1 -1.6 2 0 t2 0 q1 -1.6 2 0 t2 0 q1 -1.6 2 0 t2 0" fill="none" stroke="#e53935" stroke-width="1.05"/></svg>
<svg class="abs" style="left:0.00px;top:0.00px;pointer-events:none" width="1368.00" height="786.00" viewBox="0 0 1368 786"><path d="M241.5 112.8 q1 -1.6 2 0 t2 0 q1 -1.6 2 0 t2 0 q1 -1.6 2 0 t2 0 q1 -1.6 2 0 t2 0 q1 -1.6 2 0 t2 0 q1 -1.6 2 0 t2 0 q1 -1.6 2 0 t2 0 q1 -1.6 2 0 t2 0 q1 -1.6 2 0 t2 0 q1 -1.6 2 0 t2 0 q1 -1.6 2 0 t2 0 q1 -1.6 2 0 t2 0 q1 -1.6 2 0 t2 0 q1 -1.6 2 0 t2 0 q1 -1.6 2 0 t2 0 q1 -1.6 2 0 t2 0 q1 -1.6 2 0 t2 0 q1 -1.6 2 0 t2 0 q1 -1.6 2 0 t2 0 q1 -1.6 2 0 t2 0 q1 -1.6 2 0 t2 0 q1 -1.6 2 0 t2 0 q1 -1.6 2 0 t2 0 q1 -1.6 2 0 t2 0 q1 -1.6 2 0 t2 0 q1 -1.6 2 0 t2 0 q1 -1.6 2 0 t2 0 q1 -1.6 2 0 t2 0 q1 -1.6 2 0 t2 0 q1 -1.6 2 0 t2 0 q1 -1.6 2 0 t2 0 q1 -1.6 2 0 t2 0 q1 -1.6 2 0 t2 0 q1 -1.6 2 0 t2 0 q1 -1.6 2 0 t2 0 q1 -1.6 2 0 t2 0 q1 -1.6 2 0 t2 0 q1 -1.6 2 0 t2 0 q1 -1.6 2 0 t2 0 q1 -1.6 2 0 t2 0 q1 -1.6 2 0 t2 0 q1 -1.6 2 0 t2 0 q1 -1.6 2 0 t2 0 q1 -1.6 2 0 t2 0" fill="none" stroke="#e53935" stroke-width="1.05"/></svg>
<div class="abs" style="left:26.0px;top:147.0px;width:34.0px;height:17.0px;background:#e91e63;border-radius:9px"></div>
<div class="abs" style="left:45.6px;top:149.7px;width:11.6px;height:11.6px;background:#fff;border-radius:50%"></div>
<svg class="abs" style="left:790.80px;top:147.60px;" width="14.40" height="14.40" viewBox="0 0 24 24"><path fill="#6f6f6f" d="M12 2C6.48 2 2 6.48 2 12s4.48 10 10 10 10-4.48 10-10S17.52 2 12 2zm1 15h-2v-6h2v6zm0-8h-2V7h2v2z"/></svg>
<svg class="abs" style="left:956.50px;top:149.50px;" width="13.20" height="11.00" viewBox="0 0 13.2 11"><g fill="none" stroke="#6f6f6f" stroke-width="1.1"><path d="M0.6 1.2 H5.6 Q6.6 1.2 6.6 2.2 V10.2 Q6.6 9.4 5.6 9.4 H0.6 Z"/><path d="M12.6 1.2 H7.6 Q6.6 1.2 6.6 2.2 V10.2 Q6.6 9.4 7.6 9.4 H12.6 Z"/><path d="M1.8 3.3 H5 M1.8 5.2 H5 M1.8 7.1 H5 M8.2 3.3 H11.4 M8.2 5.2 H11.4 M8.2 7.1 H11.4" stroke-width="0.9"/></g></svg>
<div class="abs" style="left:1085.9px;top:140.1px;width:126.7px;height:29.5px;border:1px solid #3f51b5;border-radius:5px"></div>
<svg class="abs" style="left:1100.62px;top:146.82px;" width="16.56" height="16.56" viewBox="0 0 24 24"><path fill="#3f51b5" d="M11.99 2C6.47 2 2 6.48 2 12s4.47 10 9.99 10C17.52 22 22 17.52 22 12S17.52 2 11.99 2zM12 20c-4.42 0-8-3.58-8-8s3.58-8 8-8 8 3.58 8 8-3.58 8-8 8zm.5-13H11v6l5.25 3.15.75-1.23-4.5-2.67z"/></svg>
<div class="abs" style="left:1221.0px;top:140.1px;width:130.6px;height:29.5px;background:#3f51b5;border-radius:5px"></div>
<svg class="abs" style="left:1235.31px;top:146.44px;" width="17.07" height="17.07" viewBox="0 0 24 24"><path fill="#ffffff" d="M8 5v14l11-7z"/></svg>
<svg class="abs" style="left:30.30px;top:210.30px;" width="21.55" height="21.55" viewBox="0 0 24 24"><path fill="#ff820a" d="M1 21h22L12 2 1 21zm12-3h-2v-2h2v2zm0-4h-2v-4h2v4z"/></svg>
<svg class="abs" style="left:114.80px;top:280.80px;" width="7.00" height="3.60" viewBox="0 0 7 3.6"><path d="M0 0 H7 L3.5 3.6Z" fill="#6b6b6b"/></svg>
<svg class="abs" style="left:279.50px;top:280.80px;" width="7.00" height="3.60" viewBox="0 0 7 3.6"><path d="M0 0 H7 L3.5 3.6Z" fill="#6b6b6b"/></svg>
<div class="abs" style="left:1078.7px;top:274.8px;width:34.2px;height:17.0px;background:#a3a3a3;border-radius:9px"></div>
<div class="abs" style="left:1081.0px;top:277.0px;width:12.6px;height:12.6px;background:#fff;border-radius:50%"></div>
<div class="abs" style="left:1200.0px;top:274.8px;width:34.0px;height:17.0px;background:#a3a3a3;border-radius:9px"></div>
<div class="abs" style="left:1202.3px;top:277.0px;width:12.6px;height:12.6px;background:#fff;border-radius:50%"></div>
<svg class="abs" style="left:1303.50px;top:275.50px;" width="16.00" height="15.00" viewBox="0 0 16 15"><circle cx="5.55" cy="5.1" r="5.05" fill="#6e6e6e"/><rect x="2.6" y="9.6" width="5.9" height="3.2" fill="#a9a9a9"/><rect x="4.7" y="12.7" width="1.8" height="1.9" fill="#a9a9a9"/><path d="M11.9 -0.1 L12.5 1.2 L13.8 1.8 L12.5 2.4 L11.9 3.7 L11.3 2.4 L10 1.8 L11.3 1.2Z M14.1 3.6 L14.5 4.4 L15.3 4.8 L14.5 5.2 L14.1 6 L13.7 5.2 L12.9 4.8 L13.7 4.4Z" fill="#6e6e6e"/></svg>
<svg class="abs" style="left:1333.15px;top:275.07px;" width="15.64" height="15.64" viewBox="0 0 24 24"><path fill="#3f51b5" d="M12 4.5C7 4.5 2.73 7.61 1 12c1.73 4.39 6 7.5 11 7.5s9.27-3.11 11-7.5c-1.73-4.39-6-7.5-11-7.5zM12 17c-2.76 0-5-2.24-5-5s2.24-5 5-5 5 2.24 5 5-2.24 5-5 5zm0-8c-1.66 0-3 1.34-3 3s1.34 3 3 3 3-1.34 3-3-1.34-3-3-3z"/></svg>
<div class="abs" style="left:42.0px;top:506.0px;width:14.0px;height:14.0px;background:#ffb04f"></div>
<div class="abs" style="left:42.0px;top:538.0px;width:14.0px;height:14.0px;background:#64b5f6"></div>
<div class="abs" style="left:42.0px;top:570.0px;width:14.0px;height:14.0px;background:#8c5cf0"></div>
<div class="abs" style="left:705.0px;top:506.0px;width:14.0px;height:14.0px;background:#81c784"></div>
<div class="abs" style="left:705.0px;top:538.0px;width:14.0px;height:14.0px;background:#e57373"></div>
<div class="abs" style="left:705.0px;top:570.0px;width:14.0px;height:14.0px;background:#d3d3d3"></div>
<svg class="abs" style="left:34.18px;top:623.62px;" width="16.20" height="16.20" viewBox="0 0 24 24"><path fill="#3f51b5" d="M3 14h4v-4H3v4zm0 5h4v-4H3v4zM3 9h4V5H3v4zm5 5h13v-4H8v4zm0 5h13v-4H8v4zM8 5v4h13V5H8z"/></svg>
<div class="abs" style="left:26.2px;top:649.7px;width:72.8px;height:2.2px;background:#3f51b5"></div>
<svg class="abs" style="left:118.56px;top:624.46px;" width="16.34" height="16.34" viewBox="0 0 24 24"><path fill="#8d97d3" d="M10 10.02h5V21h-5zM17 21h3c1.1 0 2-.9 2-2v-9h-5v11zm3-18H5c-1.1 0-2 .9-2 2v3h19V5c0-1.1-.9-2-2-2zM3 19c0 1.1.9 2 2 2h3V10H3v9z"/></svg>
<svg class="abs" style="left:201.51px;top:624.33px;" width="15.48" height="15.48" viewBox="0 0 24 24"><path fill="#8d97d3" d="M9.4 16.6L4.8 12l4.6-4.6L8 6l-6 6 6 6 1.4-1.4zm5.2 0l4.6-4.6-4.6-4.6L16 6l6 6-6 6-1.4-1.4z"/></svg>
<svg class="abs" style="left:281.89px;top:623.31px;" width="17.73" height="17.73" viewBox="0 0 24 24"><path fill="#8d97d3" d="M8 5v14l11-7z"/></svg>
<div class="abs" style="left:14.0px;top:652.0px;width:1350.0px;height:1.2px;background:#e2e2e2"></div>
<svg class="abs" style="left:1219.50px;top:630.00px;" width="7.20" height="3.80" viewBox="0 0 7 3.6"><path d="M0 0 H7 L3.5 3.6Z" fill="#6a6a6a"/></svg>
<svg class="abs" style="left:1239.11px;top:624.61px;" width="15.53" height="15.53" viewBox="0 0 24 24"><path fill="#3f51b5" d="M7.41 18.59 8.83 20 12 16.83 15.17 20l1.41-1.41L12 14l-4.59 4.59zm9.18-13.18L15.17 4 12 7.17 8.83 4 7.41 5.41 12 10l4.59-4.59z"/></svg>
<svg class="abs" style="left:1268.61px;top:624.17px;" width="15.94" height="15.94" viewBox="0 0 24 24"><path fill="#3f51b5" d="M19.14 12.94c.04-.3.06-.61.06-.94 0-.32-.02-.64-.07-.94l2.03-1.58c.18-.14.23-.41.12-.61l-1.92-3.32c-.12-.22-.37-.29-.59-.22l-2.39.96c-.5-.38-1.03-.7-1.62-.94l-.36-2.54c-.04-.24-.24-.41-.48-.41h-3.84c-.24 0-.43.17-.47.41l-.36 2.54c-.59.24-1.13.57-1.62.94l-2.39-.96c-.22-.08-.47 0-.59.22L2.74 8.87c-.12.21-.08.47.12.61l2.03 1.58c-.05.3-.09.63-.09.94s.02.64.07.94l-2.03 1.58c-.18.14-.23.41-.12.61l1.92 3.32c.12.22.37.29.59.22l2.39-.96c.5.38 1.03.7 1.62.94l.36 2.54c.05.24.24.41.48.41h3.840c.24 0 .44-.17.47-.41l.36-2.54c.59-.24 1.13-.56 1.62-.94l2.39.96c.22.08.47 0 .59-.22l1.92-3.32c.12-.22.07-.47-.12-.61l-2.01-1.58zM12 15.6c-1.98 0-3.6-1.62-3.6-3.6s1.62-3.6 3.6-3.6 3.6 1.62 3.6 3.6-1.62 3.6-3.6 3.6z"/></svg>
<svg class="abs" style="left:1298.83px;top:624.28px;" width="16.16" height="16.16" viewBox="0 0 24 24"><path fill="#3f51b5" d="M19 9h-4V3H9v6H5l7 7 7-7zM5 18v2h14v-2H5z"/></svg>
<svg class="abs" style="left:1328.73px;top:623.98px;" width="16.13" height="16.13" viewBox="0 0 24 24"><path fill="#3f51b5" d="M12 4.5C7 4.5 2.73 7.61 1 12c1.73 4.39 6 7.5 11 7.5s9.27-3.11 11-7.5c-1.73-4.39-6-7.5-11-7.5zM12 17c-2.76 0-5-2.24-5-5s2.24-5 5-5 5 2.24 5 5-2.24 5-5 5zm0-8c-1.66 0-3 1.34-3 3s1.34 3 3 3 3-1.34 3-3-1.34-3-3-3z"/></svg>
<svg class="abs" style="left:1323.92px;top:660.23px;" width="14.32" height="14.32" viewBox="0 0 24 24"><path fill="#222" d="M12 8l-6 6 1.41 1.41L12 10.83l4.59 4.58L18 14z"/></svg>
<svg class="abs" style="left:27.38px;top:682.40px;" width="16.81" height="16.81" viewBox="0 0 24 24"><path fill="#222" d="M10 6 8.59 7.41 13.17 12l-4.58 4.59L10 18l6-6z"/></svg>
<svg class="abs" style="left:27.38px;top:702.30px;" width="16.81" height="16.81" viewBox="0 0 24 24"><path fill="#222" d="M10 6 8.59 7.41 13.17 12l-4.58 4.59L10 18l6-6z"/></svg>
<svg class="abs" style="left:28.27px;top:720.97px;" width="15.74" height="15.74" viewBox="0 0 24 24"><path fill="#222" d="M16.59 8.59 12 13.17 7.41 8.59 6 10l6 6 6-6z"/></svg>
<svg class="abs" style="left:1321.67px;top:734.03px;" width="15.99" height="15.99" viewBox="0 0 24 24"><path fill="#666" d="M16 1H4c-1.1 0-2 .9-2 2v14h2V3h12V1zm3 4H8c-1.1 0-2 .9-2 2v14c0 1.1.9 2 2 2h11c1.1 0 2-.9 2-2V7c0-1.1-.9-2-2-2zm0 16H8V7h11v14z"/></svg>
<div class="abs" style="left:50.3px;top:772.2px;width:1301.0px;height:40.0px;border:1px solid #d9d9d9;border-radius:4px"></div>
<div class="abs" style="left:60.8px;top:785.0px;width:7.2px;height:1.0px;background:#c4c4c4"></div><svg class="abs" style="left:0;top:0;white-space:pre" width="1368" height="786" viewBox="0 0 1368 786"><text x="36.00" y="27.00" font-size="18.5" fill="#ffffff" font-family="'Liberation Sans',sans-serif" font-weight="700">VM</text><text x="65.50" y="27.00" font-size="18.5" fill="rgba(255,255,255,0.85)" font-family="'Liberation Sans',sans-serif" font-weight="300">UI</text><text x="14.60" y="41.50" font-size="10.6" fill="#ffffff" font-family="'Liberation Sans',sans-serif">for</text><text textLength="58.3" lengthAdjust="spacingAndGlyphs" x="30.20" y="41.50" font-size="10.4" fill="#ffffff" font-family="'Liberation Sans',sans-serif" font-weight="700">VictoriaLogs</text><text x="113.00" y="30.90" font-size="14.4" fill="#ffffff" font-family="'Liberation Sans',sans-serif">Query</text><text x="180.00" y="31.60" font-size="14.4" fill="rgba(255,255,255,0.92)" font-family="'Liberation Sans',sans-serif">Overview</text><text x="819.50" y="32.00" font-size="12.0" fill="#ffffff" font-family="'Liberation Sans',sans-serif">0:0</text><text x="918.60" y="32.00" font-size="11.82" fill="#ffffff" font-family="'Liberation Sans',sans-serif">2026-01-09&#160;12:51:24&#160;-&#160;2026-01-09&#160;12:56:24</text><text x="1221.50" y="32.00" font-size="13.3" fill="#ffffff" font-family="'Liberation Sans',sans-serif">Off</text><text x="35.00" y="89.00" font-size="11.74" fill="#7a7a7a" font-family="'Liberation Sans',sans-serif">Log&#160;query&#160;(8ms)</text><text x="1098.30" y="89.00" font-size="12.4" fill="#7a7a7a" font-family="'Liberation Sans',sans-serif">Log&#160;limits</text><text x="39.20" y="108.60" font-size="14.0" fill="#1a1a1a" font-family="'Liberation Mono',monospace" style="stroke:#1a1a1a;stroke-width:0.35px">_time:5m&#160;|&#160;field_values&#160;kubernetes.container_name&#160;limit&#160;10</text><text x="1103.00" y="108.60" font-size="14.0" fill="#1a1a1a" font-family="'Liberation Mono',monospace" style="stroke:#1a1a1a;stroke-width:0.35px">100</text><text x="68.00" y="159.20" font-size="12.5" fill="#2a2a2a" font-family="'Liberation Sans',sans-serif">Autocomplete</text><text x="811.30" y="158.50" font-size="13.84" fill="#6a6a6a" font-family="'Liberation Sans',sans-serif">Query&#160;language&#160;docs</text><text x="975.80" y="158.50" font-size="14.4" fill="#6a6a6a" font-family="'Liberation Sans',sans-serif">Documentation</text><text x="1122.80" y="159.00" font-size="12.22" fill="#3f51b5" font-family="'Liberation Sans',sans-serif">Query&#160;History</text><text x="1257.50" y="159.00" font-size="12.0" fill="#ffffff" font-family="'Liberation Sans',sans-serif">Execute&#160;Query</text><text x="64.30" y="225.90" font-size="14.2" fill="#a05a1a" font-family="'Liberation Sans',sans-serif">Time&#160;range&#160;is&#160;overridden&#160;by&#160;the&#160;query&#160;`_time`&#160;filter.&#160;Remove&#160;`_time`&#160;from&#160;the&#160;query&#160;to&#160;use&#160;manual&#160;selection.&#160;Disable&#160;query&#160;time&#160;override&#160;in&#160;Settings.</text><text x="30.00" y="287.00" font-size="12" fill="#6b6b6b" font-family="'Liberation Mono',monospace">Top&#160;hits:&#160;</text><text x="102.00" y="287.00" font-size="12" fill="#555555" font-family="'Liberation Mono',monospace" font-weight="700">5</text><text x="136.10" y="287.00" font-size="12" fill="#6b6b6b" font-family="'Liberation Mono',monospace">|&#160;Group&#160;by:&#160;</text><text x="222.30" y="287.00" font-size="12" fill="#555555" font-family="'Liberation Mono',monospace" font-weight="700">_stream</text><text x="300.20" y="287.00" font-size="12" fill="#6b6b6b" font-family="'Liberation Mono',monospace">|</text><text x="315.00" y="287.00" font-size="12" fill="#6b6b6b" font-family="'Liberation Mono',monospace">Total:&#160;</text><text x="365.00" y="287.00" font-size="12" fill="#555555" font-family="'Liberation Mono',monospace" font-weight="700">17,650,914</text><text x="444.80" y="287.00" font-size="12" fill="#6b6b6b" font-family="'Liberation Mono',monospace">hits</text><text x="482.60" y="287.00" font-size="12" fill="#6b6b6b" font-family="'Liberation Mono',monospace">|</text><text x="496.40" y="287.00" font-size="12" fill="#6b6b6b" font-family="'Liberation Mono',monospace">Duration:&#160;</text><text x="569.60" y="287.00" font-size="12" fill="#555555" font-family="'Liberation Mono',monospace" font-weight="700">159ms</text><text x="1120.80" y="287.20" font-size="11.96" fill="#6a6a6a" font-family="'Liberation Sans',sans-serif">Stats&#160;view</text><text x="1241.60" y="287.20" font-size="11.5" fill="#6a6a6a" font-family="'Liberation Sans',sans-serif">Stacked</text><text x="64.20" y="516.70" font-size="12.31" fill="#2a2a2a" font-family="'Liberation Sans',sans-serif">kubernetes.container_name=&quot;flog&quot;,&#160;kubernetes.pod_name=&quot;flog-log-generator-58cb59f484-mhftq&quot;,&#160;k…</text><text x="679.80" y="516.70" font-size="11.9" fill="#8a8a8a" font-family="'Liberation Sans',sans-serif" font-style="italic" text-anchor="end">(17.7M)</text><text x="64.20" y="548.70" font-size="12.23" fill="#2a2a2a" font-family="'Liberation Sans',sans-serif">kubernetes.container_name=&quot;controller&quot;,&#160;kubernetes.pod_name=&quot;ingress-nginx-controller-6c894bc4f6-wv…</text><text x="679.80" y="548.70" font-size="11.9" fill="#8a8a8a" font-family="'Liberation Sans',sans-serif" font-style="italic" text-anchor="end">(41)</text><text x="64.20" y="580.70" font-size="11.96" fill="#2a2a2a" font-family="'Liberation Sans',sans-serif">kubernetes.container_name=&quot;yc-disk-csi-driver&quot;,&#160;kubernetes.pod_name=&quot;yc-disk-csi-node-v2-s9jtv&quot;,&#160;kuberne…</text><text x="679.80" y="580.70" font-size="11.9" fill="#8a8a8a" font-family="'Liberation Sans',sans-serif" font-style="italic" text-anchor="end">(6)</text><text x="727.20" y="516.70" font-size="12.22" fill="#2a2a2a" font-family="'Liberation Sans',sans-serif">kubernetes.container_name=&quot;nginx-log-generator&quot;,&#160;kubernetes.pod_name=&quot;nginx-log-generator&quot;,&#160;kuber…</text><text x="1342.60" y="516.70" font-size="11.9" fill="#8a8a8a" font-family="'Liberation Sans',sans-serif" font-style="italic" text-anchor="end">(300)</text><text x="727.20" y="548.70" font-size="12.0" fill="#2a2a2a" font-family="'Liberation Sans',sans-serif">kubernetes.container_name=&quot;yc-disk-csi-driver&quot;,&#160;kubernetes.pod_name=&quot;yc-disk-csi-node-v2-664tq&quot;,&#160;kubern…</text><text x="1342.60" y="548.70" font-size="11.9" fill="#8a8a8a" font-family="'Liberation Sans',sans-serif" font-style="italic" text-anchor="end">(8)</text><text x="727.20" y="580.70" font-size="12.6" fill="#2a2a2a" font-family="'Liberation Sans',sans-serif">other&#160;fields</text><text x="797.00" y="580.70" font-size="11.9" fill="#8a8a8a" font-family="'Liberation Sans',sans-serif" font-style="italic">(4)</text><text x="58.00" y="636.10" font-size="11.62" fill="#3f51b5" font-family="'Liberation Sans',sans-serif">Group</text><text x="143.80" y="636.10" font-size="11.63" fill="#8d97d3" font-family="'Liberation Sans',sans-serif">Table</text><text x="223.80" y="636.10" font-size="11.29" fill="#8d97d3" font-family="'Liberation Sans',sans-serif">JSON</text><text x="306.60" y="636.10" font-size="11.07" fill="#8d97d3" font-family="'Liberation Sans',sans-serif">Live</text><text x="881.20" y="636.10" font-size="12.28" fill="#6a6a6a" font-family="'Liberation Sans',sans-serif">Total logs returned: <tspan font-weight="700" fill="#3a3a3a">5</tspan></text><text x="1012.60" y="636.10" font-size="11.94" fill="#6a6a6a" font-family="'Liberation Sans',sans-serif">Total groups: <tspan font-weight="700" fill="#3a3a3a">1</tspan></text><text x="1108.00" y="636.10" font-size="11.72" fill="#6a6a6a" font-family="'Liberation Sans',sans-serif">Rows per page: <tspan font-weight="700" fill="#3a3a3a">100</tspan></text><text textLength="62.5" lengthAdjust="spacingAndGlyphs" x="27.00" y="670.80" font-size="12.3" fill="#111" font-family="'Liberation Sans',sans-serif" font-weight="700">1.&#160;Group&#160;by</text><text x="91.50" y="670.80" font-size="12" fill="#111" font-family="'Liberation Mono',monospace" font-weight="700" style="stroke:#111;stroke-width:0.25px">&quot;_stream&quot;</text><text x="156.30" y="670.80" font-size="11.16" fill="#111" font-family="'Liberation Sans',sans-serif" font-weight="700">:</text><text x="1257.30" y="670.80" font-size="12.05" fill="#6a6a6a" font-family="'Liberation Sans',sans-serif">5&#160;entries</text><text x="52.00" y="694.00" font-size="11.76" fill="#a8a8a8" font-family="'Liberation Sans',sans-serif" font-style="italic">timestamp&#160;missing</text><text x="162.30" y="693.90" font-size="12" fill="#1a1a1a" font-family="'Liberation Mono',monospace">kubernetes.container_name:&#160;flog</text><text x="398.20" y="693.90" font-size="12" fill="#1a1a1a" font-family="'Liberation Mono',monospace">hits:&#160;17618034</text><text x="52.00" y="713.90" font-size="11.76" fill="#a8a8a8" font-family="'Liberation Sans',sans-serif" font-style="italic">timestamp&#160;missing</text><text x="162.30" y="713.80" font-size="12" fill="#1a1a1a" font-family="'Liberation Mono',monospace">kubernetes.container_name:&#160;nginx-log-generator</text><text x="506.20" y="713.80" font-size="12" fill="#1a1a1a" font-family="'Liberation Mono',monospace">hits:&#160;300</text><text x="52.00" y="733.00" font-size="11.76" fill="#a8a8a8" font-family="'Liberation Sans',sans-serif" font-style="italic">timestamp&#160;missing</text><text x="162.30" y="732.90" font-size="12" fill="#1a1a1a" font-family="'Liberation Mono',monospace">kubernetes.container_name:&#160;controller</text><text x="441.40" y="732.90" font-size="12" fill="#1a1a1a" font-family="'Liberation Mono',monospace">hits:&#160;38</text></svg>
</body></html>
